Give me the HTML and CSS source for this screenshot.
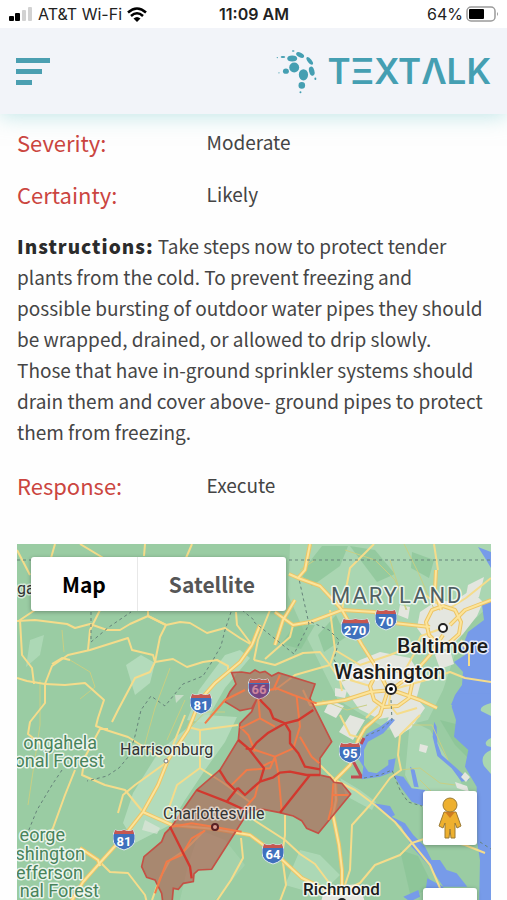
FILE: index.html
```html
<!DOCTYPE html>
<html lang="en">
<head>
    <meta charset="UTF-8">
    <meta name="viewport" content="width=device-width, initial-scale=1.0">
    <title>Textalk - Weather Alert</title>
    <link rel="stylesheet" href="styles.css">
</head>
<body>
    <div class="status-bar">
        <div class="carrier">
            <svg class="signal" viewBox="0 0 24 16" width="24" height="16">
                <rect x="0" y="10" width="5" height="5" rx="1"/>
                <rect x="6" y="7" width="5" height="8" rx="1"/>
                <rect x="13" y="4" width="4" height="11" rx="1" fill="#d2d2d2"/>
                <rect x="19" y="1" width="4" height="14" rx="1" fill="#d2d2d2"/>
            </svg>
            <span>AT&amp;T Wi-Fi</span>
            <svg class="wifi" viewBox="0 0 20 15" width="20" height="15">
                <path d="M1 5.5Q10-2.5 19 5.5M4 9Q10 3.5 16 9" fill="none" stroke="#000" stroke-width="2.5"/>
                <path d="M6.500 11.500Q10 8.500 13.500 11.500L10 15z"/>
            </svg>
        </div>
        <div class="clock">11:09 AM</div>
        <div class="battery">
            <span>64%</span>
            <svg viewBox="0 0 33 17" width="33" height="17">
                <rect x="1" y="1" width="28" height="14" rx="4" fill="#fff" stroke="#9b9b9b" stroke-width="1.500"/>
                <rect x="3" y="3" width="15" height="10" rx="1"/>
                <path d="M31 6q2 2 0 4z" fill="#9b9b9b"/>
            </svg>
        </div>
    </div>

    <header class="header">
        <button class="menu-btn" type="button" aria-label="Menu">
            <span></span>
            <span></span>
            <span></span>
        </button>
        <a class="logo" href="#" aria-label="TEXTALK">
            <svg viewBox="60 140 130 140" width="43" height="47">
                <circle cx="118" cy="198" r="15"/>
                <ellipse cx="146" cy="220" rx="14" ry="17"/>
                <ellipse cx="112" cy="171" rx="15" ry="9"/>
                <ellipse cx="136" cy="160" rx="13" ry="7" transform="rotate(28 136 160)"/>
                <ellipse cx="165" cy="178" rx="6" ry="14" transform="rotate(-38 165 178)"/>
                <ellipse cx="171" cy="209" rx="8" ry="14" transform="rotate(-15 171 209)"/>
                <ellipse cx="93" cy="209" rx="9" ry="8"/>
                <circle cx="141" cy="252" r="10"/>
                <ellipse cx="84" cy="166" rx="7" ry="3"/>
                <circle cx="67" cy="168" r="2"/>
                <ellipse cx="115" cy="148" rx="4" ry="2"/>
                <circle cx="72" cy="214" r="2"/>
                <ellipse cx="182" cy="232" rx="3" ry="4"/>
                <circle cx="137" cy="273" r="3"/>
            </svg>
            <span class="wordmark">TΞXTΛLK</span>
        </a>
    </header>

    <main class="content">
        <dl class="row">
            <dt>Severity:</dt>
            <dd>Moderate</dd>
        </dl>
        <dl class="row">
            <dt>Certainty:</dt>
            <dd>Likely</dd>
        </dl>
        <p class="instructions"><strong>Instructions:</strong> Take steps now to protect tender plants from the cold. To prevent freezing and possible bursting of outdoor water pipes they should be wrapped, drained, or allowed to drip slowly. Those that have in-ground sprinkler systems should drain them and cover above- ground pipes to protect them from freezing.</p>
        <dl class="row">
            <dt>Response:</dt>
            <dd>Execute</dd>
        </dl>

        <div class="map">
            <svg class="map-canvas" viewBox="17 544 474 400" preserveAspectRatio="xMinYMin slice">
                <defs>
                    <symbol id="shield" viewBox="0 0 22 22">
                        <path d="M2 1Q6 3 11 1Q16 3 20 1L22 6V10Q22 18 11 21Q0 18 0 10V6z" fill="#3f70bd" stroke="#dfe8ee" stroke-width="1"/>
                        <path d="M2 1Q6 3 11 1Q16 3 20 1L21 5H1z" fill="#c75650"/>
                    </symbol>
                    <g id="highways">
                        <path d="M275 645l8-25 12-20M310 544l-5 26-7 8-9-4M298 578l22 8 15 16 7 8 33 2 10 10 45 5"/>
                        <path d="M252 645l-12 17-25 21-15 17-7 18-5 12-20 30-10 25-15 27-18 23-27 30-15 17-12 20M252 645l8-20"/>
                        <path d="M80 848l18 12 2 6M143 812l29 13 43 4 35 6 27 20 25 23 25 12 18 4"/>
                        <path d="M342 610l-32 12-17 3-18-13M342 610l20 35 16 25 10 20M443 635l-13 20-15 17-24 18"/>
                        <path d="M310 705l35-5 25-8 22-2 28 10 17 8M491 600l-26 10-15 15M436 570l-1 20 6 20"/>
                        <path d="M388 690l-8 25-15 13-7 12-8 25-15 15 1 20-3 15 6 30 3 25v25"/>
                        <path d="M370 686l6-12 14-5 14 3 8 12-3 14-11 8-14 1-10-7zM426 622l6-12 11-4 12 4 6 12-2 12-10 9-12 0-8-8z"/>
                    </g>
                </defs>
                <rect x="17" y="544" width="474" height="400" fill="#9acca3"/>

                <!-- lighter land -->
                <g fill="#b9dfc1">
                    <path d="M290 544h201v60l-28 26-20 60-15 30-40 10-50-30-30-60-20-45z" opacity=".5"/>
                    <path d="M205 715l32 2-12 25-20 28-20 30-15 25-35 18-12-20 10-30 25-40 20-18z" opacity=".8"/>
                    <path d="M225 655l15-5 10 8-25 30-20 35-18-3 12-30z" opacity=".8"/>
                    <path d="M126 665l15-10 14 8-5 20-15 12z" opacity=".8"/>
                    <path d="M30 640l14-5-4 20-14 12z" opacity=".6"/>
                    <path d="M340 778l20 12 16 12-4 8-26-14zM300 850l20 5 20 20-20 20-35-10z" opacity=".6"/>
                    <path d="M410 720l20 10 30 50 20 45-20 15-40-35-15-30z" opacity=".5"/>
                    <path d="M200 830l25 10 20 25-30 35h-35l8-35z" opacity=".3"/>
                </g>
                <g fill="#87c394" opacity=".6">
                    <path d="M322 546h26l-8 20-28 20-12-12zM318 635l18-20 10 22-22 15zM350 546l25 4 20 24-18 8zM440 720l20 5 15 40-20-20z"/>
                    <path d="M412 552l22 8-5 18-18-10zM400 850l18 6 15 30-22 12zM295 625l20 0-14 24-20-5z"/>
                </g>

                <!-- built up areas -->
                <g fill="#e4e6df">
                    <path d="M360 660l20-8 30 6 12 20-6 22-15 15-22 4-20-10-14-20-8-14z"/>
                    <path d="M420 612l18-12 15 2 18-12 12 12-6 14-14 18-16 16-20-8-10-14z"/>
                    <path d="M395 700l20-4 10 12-14 20-16 10-8-16zM350 715l15 5-12 20-14-8zM330 700l14 6-8 12-12-6zM468 585l16-8-5 20-14 4zM435 655l15-5 4 14-14 5z"/>
                    <path d="M400 605l10 2-2 12-10-4zM335 688l12 2-2 8-10-2zM325 887l34-3 6 18h-44z"/>
                    <path d="M175 695l9 0-8 8zM145 820l15 8-3 6-15-4z" opacity=".6"/>
                </g>

                <!-- water -->
                <g fill="#779be9">
                    <path d="M491 600l-9 5 2 15-16 12-6 16 3 7-11 7 9 10-1 13-7 10-4 10h40z"/>
                    <path d="M478 547l13 5v16l-6-10z"/>
                    <g transform="translate(340 700) scale(.3333)">
                        <path d="M350-20L335 20 348 60 342 110 385 150 375 200 395 235 410 260 412 430 420 480 415 740H453V-20z"/>
                        <path d="M283 65L278 110 292 168 335 205 365 245 388 240 350 205 305 165 292 130 290 80z"/>
                        <path d="M155 55L120 80 80 102 60 135 48 165 70 200 65 238 120 230 160 215 167 175 145 180 145 195 110 220 85 215 72 195 72 150 84 125 130 100 165 60z"/>
                        <path d="M160 225L185 265 215 305 255 320V270L215 265 190 230zM210 200L222 260 236 262 224 210z"/>
                        <path d="M100 310L150 318 165 345 155 350 195 370 220 405 255 440 275 480 300 480 320 510 350 520 382 560H310L270 500 215 440 185 380 130 335z"/>
                        <path d="M262 535L310 560V620H250zM190 590L235 570 240 590 210 605z"/>
                    </g>
                </g>
                <path d="M491 703q-12 3-10 8l10 5zM491 738q-8 4-4 8l4 1zM491 750q-12 5-7 16l7 8z" fill="#a9d6b0"/>
                <path d="M420 744l8 2-2 7-7-2zM465 772l5 5-4 5-5-5zM455 782l12 4 2 6-12-4z" fill="#e4e6df"/>

                <!-- minor roads -->
                <g class="minor">
                    <path d="M62 630l2 22M70 660l20 12 5 15-15 12M170 668l-15 40-14 50M40 680l0 45-12 80M185 700l-18 40M345 550l30 10 20 20 12 30M404 544l15 30 15 35M322 700l25 10 20-5M420 780l15 15 30 15M380 665l-18 12-20 4M390 560l16 50M225 712l-20 0-15 16M315 560l-15 10M400 770l20-2 20 15 15 2M412 725l20 0 16 35"/>
                </g>

                <!-- local roads -->
                <g class="roads">
                    <path d="M17 621l18-1 32 4 8 4 15-4 17 6 13 0 10-6 18-8 18 9 14-3 10 1 17 10 18-5 15 10 12 7"/>
                    <path d="M35 610l-15 10 2 35 10 13 2 16"/>
                    <path d="M17 678l10 3 18 3 7-18 16-11 22-5 38-12 4 12 21 5 2 7-5 10-15 6-17 32-6 12"/>
                    <path d="M148 608v8l18 9-6 12-5 25 18-3 14 8 16-5 14-2 11 6v8"/>
                    <path d="M45 684l20 1 20-2 19 17-6 18-2 8 10 4 22 7 32 20"/>
                    <path d="M45 684v19l-15 19-2 12 14 11M52 664l10-6 8 2M100 610l-10 20-2 20"/>
                    <path d="M55 544l-4 14M17 550l13 25M80 544l30 18M145 544l-1 12M192 544l-6 14M236 612l1 13 15 20"/>
                    <path d="M108 729l-8 0-15 28-3 18 23 10 20 5 18 22"/>
                    <path d="M75 770l-10 25-12 33-8 12M98 860l12 12 18 1 17 22 3 12"/>
                    <path d="M167 762l-32 23-12 10-5 18M185 715l-12 30M200 768l-23 17-7 20-5 17M200 768l22 14 28 20M188 727l12 3v38M200 730l38-5"/>
                    <path d="M374 544l-24 24-8 42M434 544l4 26M270 610l-12 30-4 20"/>
                    <path d="M293 625l-3 12-25 22M254 660l21 5 28-12 17-1 10 13 10 15 2 11"/>
                    <path d="M330 610l5 40-5 15-35 10-20 15M335 650l25 15 30-10 30-12M303 690l7 15 35-5 25-8"/>
                    <path d="M491 682l-26-4-15-6-24 8-35 10M491 578l-25 20-16 10M425 595l17 12"/>
                    <path d="M391 690l-2 14 8 10 20-6M376 674l-20-4M404 672l10-18 12-16M443 628l-22 8-8 16M461 640l8 14 0 12M350 680l20 6M378 706l-12 12"/>
                    <path d="M420 715l-20 20-2 20 3 15-11 8-20 27-18 20-2 45-5 15"/>
                    <path d="M320 765l15 15 20 10 20 15 20 17 17 21 18 22 10 23M412 843l-12 12-25 10-15 18-15 7"/>
                    <path d="M412 843l18-6 35 8 20 8M340 715l10 20 12 3M254 820l31 20 15 14 15 10 15 20M285 815v20l-3 20 4 30-6 16M241 838l2 20-12 22-15 22"/>
                    <path d="M152 900l8-22 10-18 15-10 20-20"/>
                </g>

                <use href="#highways" class="highway-edge"/>
                <use href="#highways" class="highway"/>

                <!-- state borders -->
                <g class="border">
                    <path d="M17 560h14M289 560h202M91 612v30M91 642l18-15 22-15M231 612l-6 18-4 16-8 14-10 16-20 8-18 22-14-10-10 14-6 26-6 20-10 12-12 8-20 5M254 622l40 32 15-30-10-45M242 610l12 10M311 622l18 8 10 10-5 20 7 10"/>
                    <path d="M62 770l-10 15-15 25-9 22M391 700l1 20-12 10-14 6M364 778l16-3 12-5 8 20 8 12 14 4M480 842l11 7"/>
                </g>

                <!-- alert area, traced at three times the map scale -->
                <g transform="translate(130 660) scale(.3333)">
                    <path class="alert" d="M305 38L335 36 360 40 375 30 390 38 405 34 425 48 445 38 555 72 540 115 605 245 570 295V345L600 352 612 367 635 370 662 402 565 520 530 505 515 482 490 468 450 458 400 448 358 450 320 510 245 628 205 630 192 642 190 665 160 670 145 688 130 685 125 740H100L95 700 75 660 50 652 35 620 42 590 95 545 105 520 125 500 165 440 200 390 270 330 325 240 330 190 365 155 380 118 365 145 330 152 285 125 300 95 318 72z"/>
                    <g class="alert-roads">
                        <path d="M225 190L285 120 345 90M380 100L440 85 490 105 560 130M450 45L430 90M500 110L510 200 490 265 435 290 345 260M385 115L390 175 330 205M390 175L435 200M330 200L355 225 375 275M435 290L420 325 350 330 300 380M435 290L445 340 455 450M435 300L395 320M385 370L375 410 340 450M125 500L185 490 250 500 335 515M75 700L110 605 155 585 185 535 225 512M610 370L605 440 595 480M610 405H655M510 230L545 290 568 310"/>
                    </g>
                    <g class="county">
                        <path d="M325 240L355 265 402 325 390 365 370 382 345 405 325 385 315 390 290 365 268 330M200 390L290 425 345 450M290 425L322 385M120 500L180 620 185 655M390 365L430 352 450 338 480 335 530 345 570 345M540 345L450 458M378 100L395 125 420 150 430 175 465 190 505 180 550 150M465 190L415 218 380 248 365 268 347 265M465 190L480 215V250L505 280 525 320 570 328"/>
                    </g>
                </g>
                <path d="M353 761l8 15M351 777h11M364 738l-3 6" class="county-edge"/>

                <!-- road shields -->
                <g class="shields">
                    <use href="#shield" x="190" y="693" width="22" height="22"/><text x="201" y="710">81</text>
                    <use href="#shield" x="113" y="829" width="22" height="22"/><text x="124" y="846">81</text>
                    <use href="#shield" x="375" y="609" width="22" height="22"/><text x="386" y="626">70</text>
                    <svg x="341" y="618" width="29" height="23" viewBox="0 0 22 22" preserveAspectRatio="none"><use href="#shield" width="22" height="22"/></svg><text x="355" y="635">270</text>
                    <use href="#shield" x="339" y="742" width="22" height="22"/><text x="350" y="758">95</text>
                    <use href="#shield" x="262" y="843" width="22" height="22"/><text x="273" y="859">64</text>
                    <use href="#shield" x="248" y="678" width="22" height="22"/><text x="259" y="694">66</text>
                    <path d="M249 684h20v3q0 10-10 12q-10-3-10-12z" fill="#a32350" opacity=".55"/>
                </g>

                <!-- places -->
                <g fill="#fff" stroke="#222" stroke-width="2">
                    <circle cx="443" cy="628" r="4"/>
                    <circle cx="391" cy="689" r="5"/>
                    <circle cx="166" cy="761" r="2" stroke="#777" stroke-width="1"/>
                    <circle cx="215" cy="827" r="3" fill="#d99c90" stroke="#5a2024"/>
                    <circle cx="342" cy="903" r="4"/>
                </g>
                <circle cx="391" cy="689" r="2"/>
                <g class="labels">
                    <text class="state" x="331" y="603">MARYLAND</text>
                    <text class="city" x="397" y="653">Baltimore</text>
                    <text class="city" x="334" y="679">Washington</text>
                    <text class="town" x="120" y="755">Harrisonburg</text>
                    <text class="town" x="163" y="819">Charlottesville</text>
                    <text class="capital" x="303" y="895">Richmond</text>
                    <text class="town" x="17" y="594">ga</text>
                    <text class="forest" x="97" y="749" text-anchor="end">ongahela</text>
                    <text class="forest" x="104" y="767" text-anchor="end">onal Forest</text>
                    <text class="forest" x="65" y="841" text-anchor="end">eorge</text>
                    <text class="forest" x="85" y="860" text-anchor="end">shington</text>
                    <text class="forest" x="83" y="879" text-anchor="end">efferson</text>
                    <text class="forest" x="99" y="897" text-anchor="end">nal Forest</text>
                </g>
            </svg>

            <div class="map-type">
                <button class="active" type="button">Map</button>
                <button type="button">Satellite</button>
            </div>
            <div class="map-controls">
                <button type="button" aria-label="Street View">
                    <svg viewBox="0 0 24 42" width="24" height="42">
                        <path d="M6 15h12l5 14-4 2-2-5v15h-4l-1-9-1 9H7V26l-2 5-4-2z" fill="#eeb02f" stroke="#9a7a35" stroke-width="1"/>
                        <path d="M7 15h10l-5 6z" fill="#cf7c22"/>
                        <circle cx="12" cy="8" r="7" fill="#eeb02f" stroke="#9a7a35"/>
                    </svg>
                </button>
                <button type="button" aria-label="Zoom in"></button>
            </div>
        </div>
    </main>
</body>
</html>
```
FILE: styles.css
```css
* {
    box-sizing: border-box;
}

body {
    margin: 0;
    height: 100vh;
    display: flex;
    flex-direction: column;
    overflow: hidden;
    background-color: #fefefe;
    color: #454545;
    font-family: 'Noto Sans CJK SC', 'Open Sans', sans-serif;
    font-size: 19px;
}

button {
    border: none;
    padding: 0;
    cursor: pointer;
    font-family: inherit;
}

/* status bar */
.status-bar {
    display: grid;
    grid-template-columns: 1fr auto 1fr;
    align-items: center;
    flex: none;
    height: 28px;
    padding: 0 8px 0 9px;
    background-color: #fff;
    color: #222;
    font-family: Inter, sans-serif;
    font-size: 16px;
    z-index: 2;
}

.carrier,
.battery {
    display: flex;
    align-items: center;
    gap: 5px;
}

.battery {
    justify-content: flex-end;
    gap: 3px;
}

.clock {
    font-weight: 600;
}

/* header */
.header {
    display: flex;
    align-items: center;
    justify-content: space-between;
    flex: none;
    height: 86px;
    padding: 0 16px;
    background-color: #f2f4f9;
    box-shadow: 0 2px 20px rgba(130, 205, 210, 0.5);
    z-index: 1;
}

.menu-btn {
    display: flex;
    flex-direction: column;
    gap: 6px;
    background: none;
}

.menu-btn span {
    width: 34px;
    height: 5px;
    background-color: #4b9fb1;
}

.menu-btn span:nth-child(2) {
    width: 26px;
}

.menu-btn span:nth-child(3) {
    width: 16px;
}

.logo {
    display: flex;
    align-items: center;
    gap: 9px;
    height: 47px;
    color: #459fb2;
    fill: #459fb2;
    text-decoration: none;
}

.wordmark {
    font-family: Inter, sans-serif;
    font-size: 35px;
    font-weight: 600;
    line-height: 40px;
}

/* alert details */
.content {
    display: flex;
    flex-direction: column;
    flex: 1;
    min-height: 0;
    padding: 12px 16px 0 17px;
}

.row {
    display: grid;
    grid-template-columns: 40% 1fr;
    flex: none;
    margin: 0 0 20px;
    line-height: 32px;
}

.row dt {
    color: #cb4540;
    font-size: 22px;
}

.row dd {
    margin: 0;
}

.instructions {
    flex: none;
    margin: 0 0 22px;
    padding-right: 4px;
    line-height: 31px;
}

.instructions strong {
    color: #2b2b2b;
    font-weight: 900;
    letter-spacing: 1px;
}

/* map */
.map {
    position: relative;
    flex: 1;
    min-height: 0;
    margin-top: 23px;
    overflow: hidden;
}

.map-canvas {
    display: block;
    width: 100%;
}

.minor,
.roads,
.highway,
.highway-edge,
.border,
.alert-roads,
.county,
.county-edge {
    fill: none;
    stroke-linejoin: round;
}

.minor {
    stroke: #c8cf83;
    stroke-width: 1;
}

.roads {
    stroke: #f5dc8b;
    stroke-width: 2;
}

.highway-edge {
    stroke: #edc566;
    stroke-width: 4;
}

.highway {
    stroke: #fce49a;
    stroke-width: 2;
}

.border {
    stroke: #66837a;
    stroke-width: 1;
    stroke-dasharray: 3 3;
}

.alert {
    fill: rgba(178, 90, 78, 0.6);
    stroke: #c45145;
    stroke-width: 5;
}

.alert-roads {
    stroke: #f27b48;
    stroke-width: 6;
}

.county {
    stroke: #d2382e;
    stroke-width: 7;
}

.county-edge {
    stroke: #c04a52;
    stroke-width: 3;
}

.shields text {
    fill: #fff;
    font-family: Roboto, sans-serif;
    font-size: 13px;
    font-weight: 700;
    text-anchor: middle;
}

.labels text {
    font-family: Roboto, sans-serif;
    paint-order: stroke;
    stroke: rgba(255, 255, 255, 0.8);
    stroke-width: 3px;
    stroke-linejoin: round;
}

.labels .state {
    fill: #4f5f63;
    font-size: 22px;
    letter-spacing: 2px;
}

.labels .city {
    fill: #1c1c1c;
    font-size: 21px;
    font-weight: 500;
}

.labels .capital {
    fill: #1c1c1c;
    font-size: 17px;
    font-weight: 500;
}

.labels .town {
    fill: #333;
    font-size: 16px;
    stroke: rgba(255, 255, 255, 0.6);
}

.labels .forest {
    fill: #48835b;
    font-size: 18px;
}

.map-type {
    position: absolute;
    top: 13px;
    left: 14px;
    display: flex;
    border-radius: 3px;
    background-color: #fff;
    box-shadow: 0 1px 4px rgba(0, 0, 0, 0.3);
}

.map-type button {
    height: 54px;
    padding: 0 31px;
    background: none;
    color: #565656;
    font-size: 21px;
    font-weight: 700;
}

.map-type .active {
    border-right: 1px solid #e8e8e8;
    color: #000;
}

.map-controls {
    position: absolute;
    top: 247px;
    right: 14px;
    display: flex;
    flex-direction: column;
    gap: 43px;
}

.map-controls button {
    display: flex;
    align-items: center;
    justify-content: center;
    width: 54px;
    height: 54px;
    border-radius: 3px;
    background-color: #fff;
    box-shadow: 0 1px 4px rgba(0, 0, 0, 0.3);
}
```
